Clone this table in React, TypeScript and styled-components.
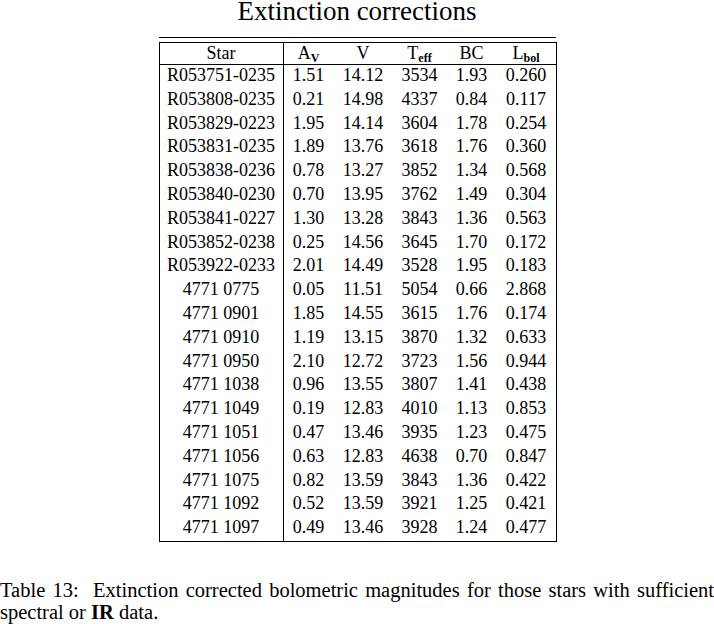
import React from 'react';
import styled, { createGlobalStyle } from 'styled-components';

const GlobalStyle = createGlobalStyle`
  html, body {
    margin: 0;
    padding: 0;
    background: #ffffff;
  }
  body {
    color: #000000;
    font-family: "Liberation Serif", "Times New Roman", serif;
  }
`;

const Page = styled.div`
  width: 714px;
  height: 624px;
  overflow: hidden;
  background: #ffffff;
`;

const Title = styled.h1`
  margin: 0 0 15px 0;
  font-size: 27px;
  font-weight: 400;
  line-height: 22px;
  text-align: center;
`;

const TableFrame = styled.div`
  width: 397px;
  margin: 0 auto;
  border-top: 1px solid #000;
  padding-top: 4px;
`;

const DataTable = styled.table`
  width: 397px;
  table-layout: fixed;
  border-collapse: separate;
  border-spacing: 0;
  border: 1px solid #000;
  font-size: 18px;
`;

const HeadCell = styled.th<{ $first?: boolean }>`
  height: 20px;
  padding: 1px 0 0 0;
  font-weight: 400;
  text-align: center;
  white-space: nowrap;
  line-height: 18px;
  vertical-align: top;
  border-bottom: 1px solid #000;
  border-right: ${(p) => (p.$first ? '1px solid #000' : 'none')};
`;

const Cell = styled.td<{ $first?: boolean }>`
  height: 22.8px;
  padding: 1px 0 0 0;
  text-align: center;
  white-space: nowrap;
  line-height: 18px;
  vertical-align: top;
  border-right: ${(p) => (p.$first ? '1px solid #000' : 'none')};
`;

const Sub = styled.sub`
  font-size: 12px;
  font-weight: 700;
  vertical-align: -3px;
  line-height: 0;
`;

const Caption = styled.div`
  margin-top: 37px;
  font-size: 20.5px;
  line-height: 22px;
`;

const JustifiedLine = styled.div`
  text-align: justify;
  text-align-last: justify;
  white-space: nowrap;
`;

const Line = styled.div`
  text-align: left;
`;

const columns = [124, 50, 59, 54, 50, 59];

const rows: string[][] = [
  ['R053751-0235', '1.51', '14.12', '3534', '1.93', '0.260'],
  ['R053808-0235', '0.21', '14.98', '4337', '0.84', '0.117'],
  ['R053829-0223', '1.95', '14.14', '3604', '1.78', '0.254'],
  ['R053831-0235', '1.89', '13.76', '3618', '1.76', '0.360'],
  ['R053838-0236', '0.78', '13.27', '3852', '1.34', '0.568'],
  ['R053840-0230', '0.70', '13.95', '3762', '1.49', '0.304'],
  ['R053841-0227', '1.30', '13.28', '3843', '1.36', '0.563'],
  ['R053852-0238', '0.25', '14.56', '3645', '1.70', '0.172'],
  ['R053922-0233', '2.01', '14.49', '3528', '1.95', '0.183'],
  ['4771 0775', '0.05', '11.51', '5054', '0.66', '2.868'],
  ['4771 0901', '1.85', '14.55', '3615', '1.76', '0.174'],
  ['4771 0910', '1.19', '13.15', '3870', '1.32', '0.633'],
  ['4771 0950', '2.10', '12.72', '3723', '1.56', '0.944'],
  ['4771 1038', '0.96', '13.55', '3807', '1.41', '0.438'],
  ['4771 1049', '0.19', '12.83', '4010', '1.13', '0.853'],
  ['4771 1051', '0.47', '13.46', '3935', '1.23', '0.475'],
  ['4771 1056', '0.63', '12.83', '4638', '0.70', '0.847'],
  ['4771 1075', '0.82', '13.59', '3843', '1.36', '0.422'],
  ['4771 1092', '0.52', '13.59', '3921', '1.25', '0.421'],
  ['4771 1097', '0.49', '13.46', '3928', '1.24', '0.477'],
];

const App = () => {
  return (
    <Page>
      <GlobalStyle />
      <Title>Extinction corrections</Title>
      <TableFrame>
        <DataTable>
          <colgroup>
            {columns.map((w, i) => (
              <col key={i} style={{ width: w }} />
            ))}
          </colgroup>
          <thead>
            <tr>
              <HeadCell $first>Star</HeadCell>
              <HeadCell>
                A<Sub>V</Sub>
              </HeadCell>
              <HeadCell>V</HeadCell>
              <HeadCell>
                T<Sub>eff</Sub>
              </HeadCell>
              <HeadCell>BC</HeadCell>
              <HeadCell>
                L<Sub>bol</Sub>
              </HeadCell>
            </tr>
          </thead>
          <tbody>
            {rows.map((row) => (
              <tr key={row[0]}>
                {row.map((value, i) => (
                  <Cell key={i} $first={i === 0}>
                    {value}
                  </Cell>
                ))}
              </tr>
            ))}
          </tbody>
        </DataTable>
      </TableFrame>
      <Caption>
        <JustifiedLine>
          Table 13:&nbsp; Extinction corrected bolometric magnitudes for those stars with sufficient
        </JustifiedLine>
        <Line>
          spectral or <b>IR</b> data.
        </Line>
      </Caption>
    </Page>
  );
};

export default App;
